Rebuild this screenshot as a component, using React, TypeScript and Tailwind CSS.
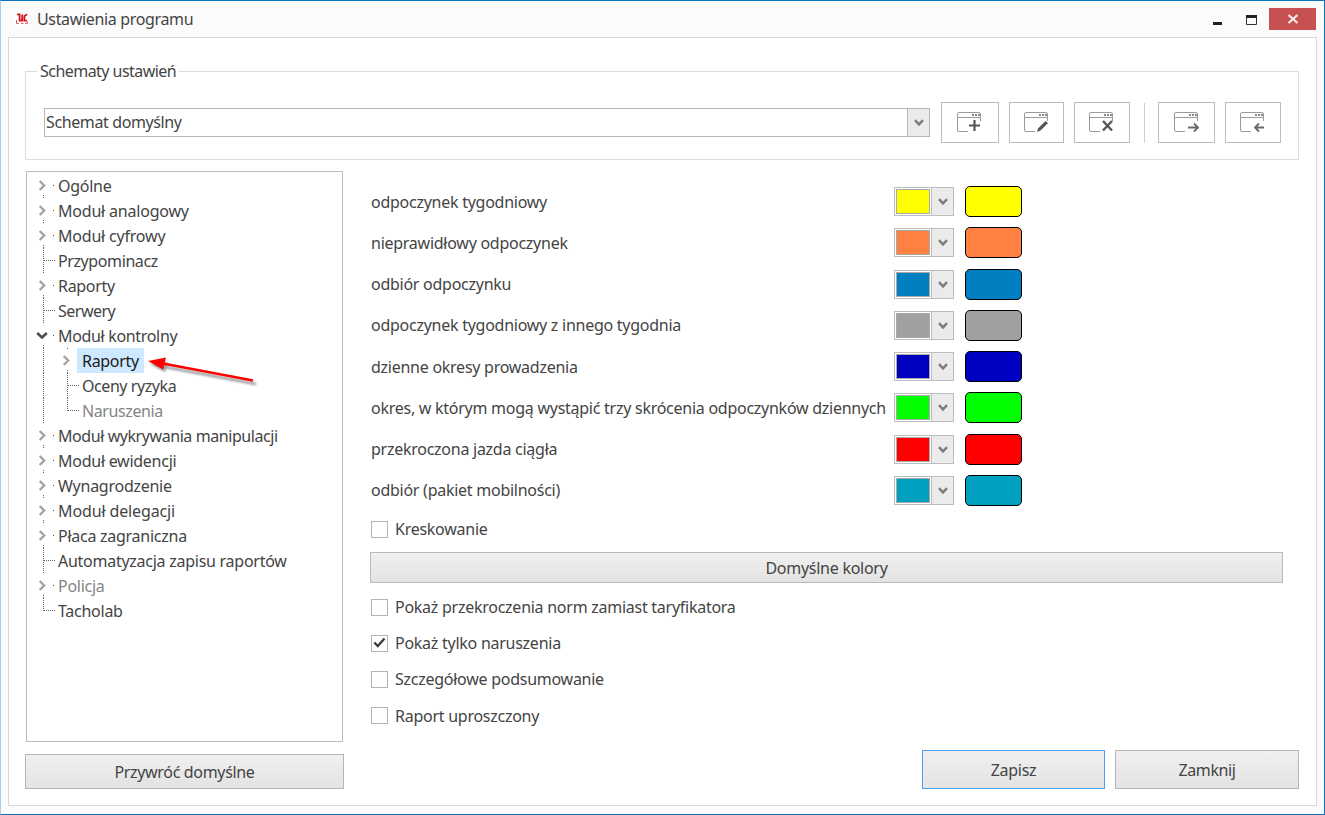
import type { ReactNode } from 'react';
import clsx from 'clsx';

type TreeItem = {
  label: string;
  kind: 'closed' | 'open' | 'leaf';
  level?: number;
  last?: boolean;
  muted?: boolean;
  selected?: boolean;
  tracking?: string;
};

const treeItems: TreeItem[] = [
  { label: 'Ogólne', kind: 'closed' },
  { label: 'Moduł analogowy', kind: 'closed', tracking: 'tracking-[-0.2px]' },
  { label: 'Moduł cyfrowy', kind: 'closed', tracking: 'tracking-[-0.2px]' },
  { label: 'Przypominacz', kind: 'leaf', tracking: 'tracking-[-0.4px]' },
  { label: 'Raporty', kind: 'closed', tracking: 'tracking-[-0.3px]' },
  { label: 'Serwery', kind: 'leaf', tracking: 'tracking-[-0.5px]' },
  { label: 'Moduł kontrolny', kind: 'open', tracking: 'tracking-[-0.33px]' },
  { label: 'Raporty', kind: 'closed', level: 1, selected: true, tracking: 'tracking-[-0.3px]' },
  { label: 'Oceny ryzyka', kind: 'leaf', level: 1, tracking: 'tracking-[-0.43px]' },
  { label: 'Naruszenia', kind: 'leaf', level: 1, last: true, muted: true, tracking: 'tracking-[-0.4px]' },
  { label: 'Moduł wykrywania manipulacji', kind: 'closed', tracking: 'tracking-[-0.43px]' },
  { label: 'Moduł ewidencji', kind: 'closed' },
  { label: 'Wynagrodzenie', kind: 'closed' },
  { label: 'Moduł delegacji', kind: 'closed', tracking: 'tracking-[-0.13px]' },
  { label: 'Płaca zagraniczna', kind: 'closed' },
  { label: 'Automatyzacja zapisu raportów', kind: 'leaf' },
  { label: 'Policja', kind: 'closed', muted: true },
  { label: 'Tacholab', kind: 'leaf', last: true },
];

const colors = [
  { label: 'odpoczynek tygodniowy', swatch: 'bg-[#ffff00]' },
  { label: 'nieprawidłowy odpoczynek', swatch: 'bg-[#ff8040]' },
  { label: 'odbiór odpoczynku', swatch: 'bg-[#0080c0]' },
  { label: 'odpoczynek tygodniowy z innego tygodnia', swatch: 'bg-[#a0a0a0]' },
  { label: 'dzienne okresy prowadzenia', swatch: 'bg-[#0000c0]' },
  { label: 'okres, w którym mogą wystąpić trzy skrócenia odpoczynków dziennych', swatch: 'bg-[#00ff00]' },
  { label: 'przekroczona jazda ciągła', swatch: 'bg-[#ff0000]' },
  { label: 'odbiór (pakiet mobilności)', swatch: 'bg-[#00a0c0]' },
];

const options = [
  { label: 'Pokaż przekroczenia norm zamiast taryfikatora', checked: false },
  { label: 'Pokaż tylko naruszenia', checked: true },
  { label: 'Szczegółowe podsumowanie', checked: false },
  { label: 'Raport uproszczony', checked: false },
];

const Chevron = () => (
  <svg width="10" height="8" viewBox="0 0 10 8" fill="none">
    <path d="M1 1.2 5 5.4 9 1.2" stroke="#7c7c7c" strokeWidth="2.4" />
  </svg>
);

/* Dotted guide lines and the expander of a single tree row */
const Gutter = ({ kind, last, nested }: { kind: TreeItem['kind']; last?: boolean; nested?: boolean }) => (
  <svg width="24" height="25" viewBox="0 0 24 25" fill="none" className="shrink-0">
    {kind === 'leaf' && (
      <>
        <path d={last ? 'M9.5 0V13' : 'M9.5 0V25'} stroke="#666" strokeDasharray="1 1" />
        <path d="M10 12.5H21" stroke="#666" strokeDasharray="1 1" />
      </>
    )}
    {kind !== 'leaf' && (
      <>
        {nested && <path d="M9.5 0V1" stroke="#666" />}
        <path d="M9.5 22V25" stroke="#666" strokeDasharray="1 1" />
        <path d="M19 12.5H20" stroke="#555" />
      </>
    )}
    {kind === 'closed' && <path d="M5.7 8 10.2 12.5 5.7 17" stroke="#a3a3a3" strokeWidth="2.4" />}
    {kind === 'open' && <path d="M3.2 10 8 14.4 12.8 10" stroke="#4c4c4c" strokeWidth="2.6" />}
  </svg>
);

const TreeRow = ({ label, kind, level, last, muted, selected, tracking }: TreeItem) => (
  <div className="flex h-[25px] items-center">
    {level && (
      <svg width="24" height="25" viewBox="0 0 24 25" fill="none" className="shrink-0">
        <path d="M9.5 0V25" stroke="#666" strokeDasharray="1 1" />
      </svg>
    )}
    <Gutter kind={kind} last={last} nested={!!level} />
    <span
      className={clsx(
        'flex h-[25px] items-center whitespace-nowrap',
        selected && '-ml-[5px] bg-[#cde8ff] pr-[5px] pl-[5px] text-[#1a1a1a]',
        muted && 'text-[#858585]',
        tracking,
      )}
    >
      {label}
    </span>
  </div>
);

const ToolButton = ({ className, children }: { className?: string; children: ReactNode }) => (
  <button className={clsx('flex h-[41px] items-center justify-center border border-[#bcbcbc] bg-white', className)}>
    <svg width="26" height="24" viewBox="0 0 26 24" fill="none" className="-mt-px -ml-[2px]">
      <path d="M12 21.5H3Q1.5 21.5 1.5 20V4Q1.5 2.5 3 2.5H23Q24.5 2.5 24.5 4V11" stroke="#9b9b9b" />
      <path d="M1.5 7.5H24.5" stroke="#9b9b9b" />
      <path d="M16 5H24" stroke="#888" strokeWidth="2" strokeDasharray="2 1" />
      {children}
    </svg>
  </button>
);

const PushButton = ({ className, children }: { className?: string; children: ReactNode }) => (
  <button className={clsx('border bg-linear-to-b from-[#f0f0f0] to-[#e3e3e3]', className)}>{children}</button>
);

const CheckRow = ({ label, checked, className }: { label: string; checked?: boolean; className?: string }) => (
  <label className={clsx('flex items-center gap-[7px]', className)}>
    <span className="flex size-[17px] items-center justify-center border border-[#b4b4b4] bg-white">
      {checked && (
        <svg width="13" height="12" viewBox="0 0 13 12" fill="none">
          <path d="M1.3 5.5 4.8 9 11.5 1.5" stroke="#3c3c3c" strokeWidth="2.3" />
        </svg>
      )}
    </span>
    {label}
  </label>
);

export default function App() {
  return (
    <div className="relative flex h-[815px] w-[1325px] flex-col border border-[#0a74c4] border-l-[#a9cdec] bg-[#fbfbfb] px-[7px] pb-[9px] font-['Noto_Sans','Open_Sans',sans-serif] text-base leading-5 tracking-[-0.26px] text-[#444]">
      {/* Title bar */}
      <header className="flex h-9 shrink-0 items-center">
        <svg width="16" height="16" viewBox="0 0 16 16" fill="none" className="ml-[6px]">
          <circle cx="8" cy="8" r="8" fill="#fff" />
          <path d="M3 3.4H5.6V9.5H8.2V3.4M13 3.2 10.4 5.2V9.6H13" stroke="#d4141c" strokeWidth="1.8" />
          <path d="M2.5 9V12.4H5M7 12.4H9.5M11 12.4H13.5V10.5" stroke="#e0575c" />
        </svg>
        <h1 className="ml-[7px] tracking-[-0.34px]">Ustawienia programu</h1>
        <div className="ml-auto flex items-center">
          <svg width="50" height="16" viewBox="0 0 50 16" fill="none">
            <path d="M1 12.5H10" stroke="#222" strokeWidth="3" />
            <path d="M34.5 5V13.5H44.5V5" stroke="#333" />
            <path d="M34 5.5H45" stroke="#222" strokeWidth="3" />
          </svg>
          <button className="mr-px ml-[7px] flex h-[22px] w-[47px] items-center justify-center bg-[#c75050]">
            <svg width="12" height="10" viewBox="0 0 12 10" fill="none">
              <path d="M1.5 1 10.5 9M10.5 1 1.5 9" stroke="#f7e9e9" strokeWidth="2.2" />
            </svg>
          </button>
        </div>
      </header>

      <main className="flex flex-1 flex-col border border-[#d8d8d8] bg-white px-4 pb-4">
        {/* Schemes */}
        <fieldset className="mt-[23px] mr-px h-[99px] border border-[#dcdcdc] pl-[11px]">
          <legend className="px-[3px] tracking-[-0.54px]">Schematy ustawień</legend>
          <div className="mt-[21px] ml-[7px] flex items-center">
            <div className="flex h-[29px] w-[886px] border border-[#b7b7b7] bg-white">
              <span className="flex-1 pl-px leading-[26px] tracking-[-0.38px]">Schemat domyślny</span>
              <span className="flex w-[22px] items-center justify-center border-l border-[#b7b7b7] bg-[#ebebeb]">
                <Chevron />
              </span>
            </div>
            <ToolButton className="ml-[11px] w-[58px]">
              <path d="M13 15.5H24M18.5 10V21" stroke="#555" strokeWidth="2.2" />
            </ToolButton>
            <ToolButton className="ml-[10px] w-[55px]">
              <path d="M14 22 15 18.5 22.5 11 25 13 17.5 20.5Z" fill="#555" />
            </ToolButton>
            <ToolButton className="ml-[10px] w-[56px]">
              <path d="M15 11 24 20.5M24 11 15 20.5" stroke="#555" strokeWidth="2.4" />
            </ToolButton>
            <div className="ml-[14px] h-10 w-px bg-[#cfcfcf]" />
            <ToolButton className="ml-[13px] w-[57px]">
              <path d="M15 17.5H25M21 13.5 25 17.5 21 21.5" stroke="#6a6a6a" strokeWidth="1.8" />
            </ToolButton>
            <ToolButton className="ml-[10px] w-[56px]">
              <path d="M25 17.5H16M20 13.5 16 17.5 20 21.5" stroke="#6a6a6a" strokeWidth="1.8" />
            </ToolButton>
          </div>
        </fieldset>

        <div className="flex flex-1">
          {/* Navigation tree */}
          <aside className="flex w-[319px] flex-col pt-[11px]">
            <nav className="ml-px h-[571px] w-[317px] border border-[#bdbdbd] pt-px pl-[7px]">
              {treeItems.map((item, index) => (
                <TreeRow key={index} {...item} />
              ))}
            </nav>
            <PushButton className="mt-3 h-[35px] w-[319px] border-[#b5b5b5] tracking-[-0.33px]">
              Przywróć domyślne
            </PushButton>
          </aside>

          {/* Report settings */}
          <section className="ml-[26px] flex flex-1 flex-col pt-[21px]">
            {colors.map(({ label, swatch }) => (
              <div key={label} className="flex h-[41.25px] shrink-0 items-center">
                <span className="w-[524px] pl-px whitespace-nowrap">{label}</span>
                <span className="flex h-[29px] w-[60px] border border-[#bdbdbd] bg-white">
                  <span className="flex w-[37px] border-r border-[#bdbdbd] p-px">
                    <span className={clsx('flex-1 border border-[#a9a9a9]', swatch)} />
                  </span>
                  <span className="flex flex-1 items-center justify-center bg-[#ebebeb] pt-px">
                    <Chevron />
                  </span>
                </span>
                <span className={clsx('ml-[11px] h-[31px] w-[57px] rounded-[5px] border border-black', swatch)} />
              </div>
            ))}

            <CheckRow label="Kreskowanie" className="mt-[8px] ml-px h-5" />
            <PushButton className="mt-[13px] h-[31px] w-[913px] shrink-0 border-[#bababa]">Domyślne kolory</PushButton>
            <div className="mt-[6px] ml-px">
              {options.map((option) => (
                <CheckRow key={option.label} className="h-[36.2px]" {...option} />
              ))}
            </div>

            <div className="mt-auto mr-px flex justify-end gap-[10px]">
              <PushButton className="h-[39px] w-[183px] border-[#4aa0f5]">Zapisz</PushButton>
              <PushButton className="h-[39px] w-[184px] border-[#b5b5b5] tracking-[-0.4px]">Zamknij</PushButton>
            </div>
          </section>
        </div>
      </main>

      {/* Pointer drawn over the tree */}
      <svg width="120" height="40" viewBox="0 0 120 40" className="absolute top-[350px] left-[142px]">
        <g className="opacity-40 blur-[1px]" transform="translate(2 3)">
          <path d="M5 10 23 8 20 18Z" fill="#000" />
          <path d="M20 13 111 30" stroke="#000" strokeWidth="2.4" />
        </g>
        <path d="M5 10 23 6.5 20 18.5Z" fill="#f00" />
        <path d="M20 12.5 110 29.5" stroke="#f00" strokeWidth="2.4" />
      </svg>
    </div>
  );
}
